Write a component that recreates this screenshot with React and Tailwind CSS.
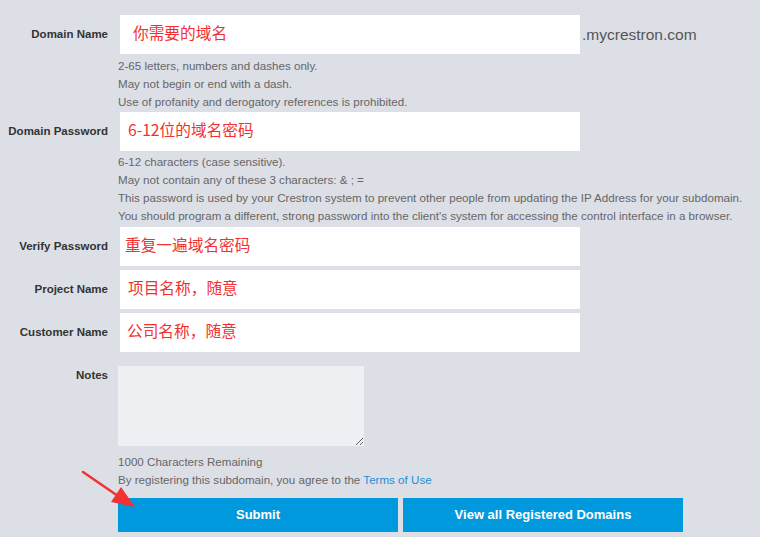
import React from 'react';

const font = { fontFamily: '"Liberation Sans", Arial, "Noto Sans CJK SC", sans-serif' };
const cjk = { fontFamily: '"Noto Sans CJK SC", "Liberation Sans", sans-serif' };

function Label({ children, top }) {
  return (
    <div className={`w-[108px] shrink-0 whitespace-nowrap text-right text-[11.5px] font-bold text-[#333] ${top ? 'pt-[1px]' : ''}`}>
      {children}
    </div>
  );
}

function Field({ label, value, pad }) {
  return (
    <div className="flex items-center">
      <Label>{label}</Label>
      <input
        readOnly
        defaultValue={value}
        className={`ml-[12px] h-[39px] w-[460px] bg-white pb-[5px] text-[15.7px] text-[#f23030] outline-none ${pad}`}
        style={cjk}
      />
    </div>
  );
}

function Help({ lines, className }) {
  return (
    <div className={`ml-[118px] text-[11.6px] leading-[18px] text-[#666] ${className}`}>
      {lines.map((l, i) => (
        <div key={i} className="whitespace-nowrap">{l}</div>
      ))}
    </div>
  );
}

export default function App() {
  return (
    <div className="relative min-h-[537px] w-[760px] overflow-hidden bg-[#dcdfe6] pt-[15px]" style={font}>
      <div className="flex items-center">
        <Label>Domain Name</Label>
        <input
          readOnly
          defaultValue="你需要的域名"
          className="ml-[12px] h-[39px] w-[460px] bg-white pb-[5px] pl-[13px] text-[15.7px] text-[#f23030] outline-none"
          style={cjk}
        />
        <span className="ml-[2px] text-[15.5px] text-[#555]">.mycrestron.com</span>
      </div>
      <Help
        className="mt-[3px] mb-[1px]"
        lines={[
          '2-65 letters, numbers and dashes only.',
          'May not begin or end with a dash.',
          'Use of profanity and derogatory references is prohibited.',
        ]}
      />
      <Field label="Domain Password" value="6-12位的域名密码" pad="pl-[8px]" />
      <Help
        className="mt-[2px] mb-[2px]"
        lines={[
          '6-12 characters (case sensitive).',
          'May not contain any of these 3 characters: & ; =',
          'This password is used by your Crestron system to prevent other people from updating the IP Address for your subdomain.',
          "You should program a different, strong password into the client's system for accessing the control interface in a browser.",
        ]}
      />
      <div className="flex flex-col gap-[4px]">
        <Field label="Verify Password" value="重复一遍域名密码" pad="pl-[5px]" />
        <Field label="Project Name" value="项目名称，随意" pad="pl-[8px]" />
        <Field label="Customer Name" value="公司名称，随意" pad="pl-[7px]" />
      </div>
      <div className="mt-[14px] flex items-start">
        <Label top>Notes</Label>
        <textarea className="ml-[10px] h-[80px] w-[246px] bg-[#eff0f3] outline-none" />
      </div>
      <div className="ml-[118px] mt-[7px] text-[11.6px] leading-[18px] text-[#666]">
        <div>1000 Characters Remaining</div>
        <div className="whitespace-nowrap">
          By registering this subdomain, you agree to the{' '}
          <a href="#" className="text-[#1a8fd6]">Terms of Use</a>
        </div>
      </div>
      <div className="ml-[118px] mt-[9px] flex gap-[5px]">
        <button className="h-[34px] w-[280px] bg-[#0099dd] text-[13px] font-bold text-white">Submit</button>
        <button className="h-[34px] w-[280px] bg-[#0099dd] text-[13px] font-bold text-white">View all Registered Domains</button>
      </div>
      <svg className="pointer-events-none absolute left-0 top-0" width="760" height="537">
        <line x1="83" y1="472" x2="118" y2="496" stroke="#f03232" strokeWidth="2.5" strokeLinecap="round" />
        <polygon points="135,507 111,502 121,487" fill="#f03232" />
      </svg>
    </div>
  );
}
